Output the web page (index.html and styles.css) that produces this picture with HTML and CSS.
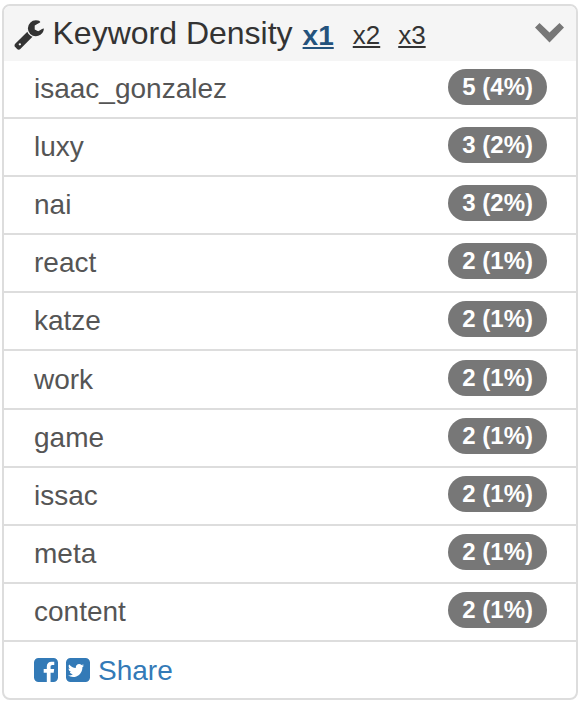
FILE: index.html
```html
<!DOCTYPE html>
<html lang="en">
<head>
  <meta charset="UTF-8">
  <meta name="viewport" content="width=device-width, initial-scale=1.0">
  <title>Keyword Density</title>
  <link rel="stylesheet" href="styles.css">
</head>
<body>
  <div class="panel">
    <div class="panel-heading">
      <svg class="icon-wrench" viewBox="0 0 1792 1792"><path d="M448 1472q0-26-19-45t-45-19-45 19-19 45 19 45 45 19 45-19 19-45zm644-420l-682 682q-37 37-90 37-52 0-91-37l-106-108q-38-36-38-90 0-53 38-91l681-681q39 98 114.5 173.5t173.5 114.5zm634-435q0 39-23 106-47 134-164.5 217.5t-258.5 83.5q-185 0-316.5-131.5t-131.5-316.5 131.5-316.5 316.5-131.5q58 0 121.5 16.5t107.5 46.5q16 11 16 28t-16 28l-293 169v224l193 107q5-3 79-48.5t135.5-81 70.5-35.5q15 0 23.5 10t8.5 25z"/></svg>
      <span class="panel-title">Keyword Density</span>
      <a class="multi active" href="#">x1</a>
      <a class="multi" href="#">x2</a>
      <a class="multi" href="#">x3</a>
      <svg class="icon-chevron" viewBox="0 0 30 20"><polygon points="0,4.5 4.5,0 14.5,9.5 24.5,0 29,4.5 14.5,19.5"/></svg>
    </div>
    <ul class="keyword-list">
      <li><span>isaac_gonzalez</span><span class="badge">5 (4%)</span></li>
      <li><span>luxy</span><span class="badge">3 (2%)</span></li>
      <li><span>nai</span><span class="badge">3 (2%)</span></li>
      <li><span>react</span><span class="badge">2 (1%)</span></li>
      <li><span>katze</span><span class="badge">2 (1%)</span></li>
      <li><span>work</span><span class="badge">2 (1%)</span></li>
      <li><span>game</span><span class="badge">2 (1%)</span></li>
      <li><span>issac</span><span class="badge">2 (1%)</span></li>
      <li><span>meta</span><span class="badge">2 (1%)</span></li>
      <li><span>content</span><span class="badge">2 (1%)</span></li>
    </ul>
    <div class="share">
      <svg class="icon-share" viewBox="128 128 1536 1536"><path d="M1376 128q119 0 203.5 84.5t84.5 203.5v960q0 119-84.5 203.5t-203.5 84.5h-188v-595h199l30-232h-229v-148q0-56 23.5-84t91.5-28l122-1v-207q-63-9-178-9-136 0-217.5 80t-81.5 226v171h-200v232h200v595h-532q-119 0-203.5-84.5t-84.5-203.5v-960q0-119 84.5-203.5t203.5-84.5h960z"/></svg>
      <svg class="icon-share" viewBox="128 128 1536 1536"><path d="M1280 610q-56 25-121 34 68-40 93-117-65 38-134 51-61-66-153-66-87 0-148.5 61.5t-61.5 148.5q0 29 5 48-129-7-242-65t-192-155q-29 50-29 106 0 114 91 175-47-1-100-26v2q0 75 50 133.5t123 72.5q-29 8-51 8-13 0-39-4 21 63 74.5 104t121.5 42q-116 90-261 90-26 0-50-3 148 94 322 94 112 0 210-35.5t168-95 120.5-137 75-162 24.5-168.5q0-8-1-24 63-46 105-109zm384-194v960q0 119-84.5 203.5t-203.5 84.5h-960q-119 0-203.5-84.5t-84.5-203.5v-960q0-119 84.5-203.5t203.5-84.5h960q119 0 203.5 84.5t84.5 203.5z"/></svg>
      <a class="share-link" href="#">Share</a>
    </div>
  </div>
</body>
</html>
```

FILE: styles.css
```css
body {
  font-family: "Liberation Sans", Arial, sans-serif;
  background-color: #fff;
  margin: 0;
}

.panel {
  margin: 4px 0 0 2px;
  height: 696px;
  box-sizing: border-box;
  border: 2px solid #ddd;
  border-radius: 8px;
  overflow: hidden;
}

.panel-heading {
  display: flex;
  align-items: center;
  height: 55px;
  padding: 0 11px 0 8.5px;
  background-color: #f5f5f5;
  color: #333;
}

.icon-wrench {
  width: 32px;
  height: 32px;
  fill: #333;
  margin-right: 8px;
}

.panel-title {
  font-size: 32px;
  margin-right: 10px;
}

.multi {
  font-size: 26px;
  color: #333;
  margin-right: 18px;
  margin-top: 4px;
}

.multi.active {
  font-size: 28px;
  font-weight: bold;
  color: #23527c;
  margin-right: 19px;
}

.icon-chevron {
  width: 30px;
  height: 20px;
  fill: #777;
  margin-left: auto;
  margin-bottom: 2px;
}

.keyword-list {
  list-style: none;
  margin: 0;
  padding: 0;
}

.keyword-list li {
  display: flex;
  justify-content: space-between;
  align-items: center;
  height: 58.1px;
  box-sizing: border-box;
  padding: 0 29px 0 30px;
  border-bottom: 2px solid #ddd;
  font-size: 28px;
  color: #555;
}

.badge {
  background-color: #777;
  color: #fff;
  font-size: 24px;
  font-weight: bold;
  line-height: 36px;
  padding: 0 14px;
  border-radius: 18px;
  margin-top: -4px;
}

.share {
  display: flex;
  align-items: center;
  padding: 11px 30px;
}

.icon-share {
  width: 24px;
  height: 24px;
  fill: #337ab7;
  margin-right: 8px;
}

.share-link {
  font-size: 28px;
  color: #337ab7;
  text-decoration: none;
  margin-top: 2px;
}
```
